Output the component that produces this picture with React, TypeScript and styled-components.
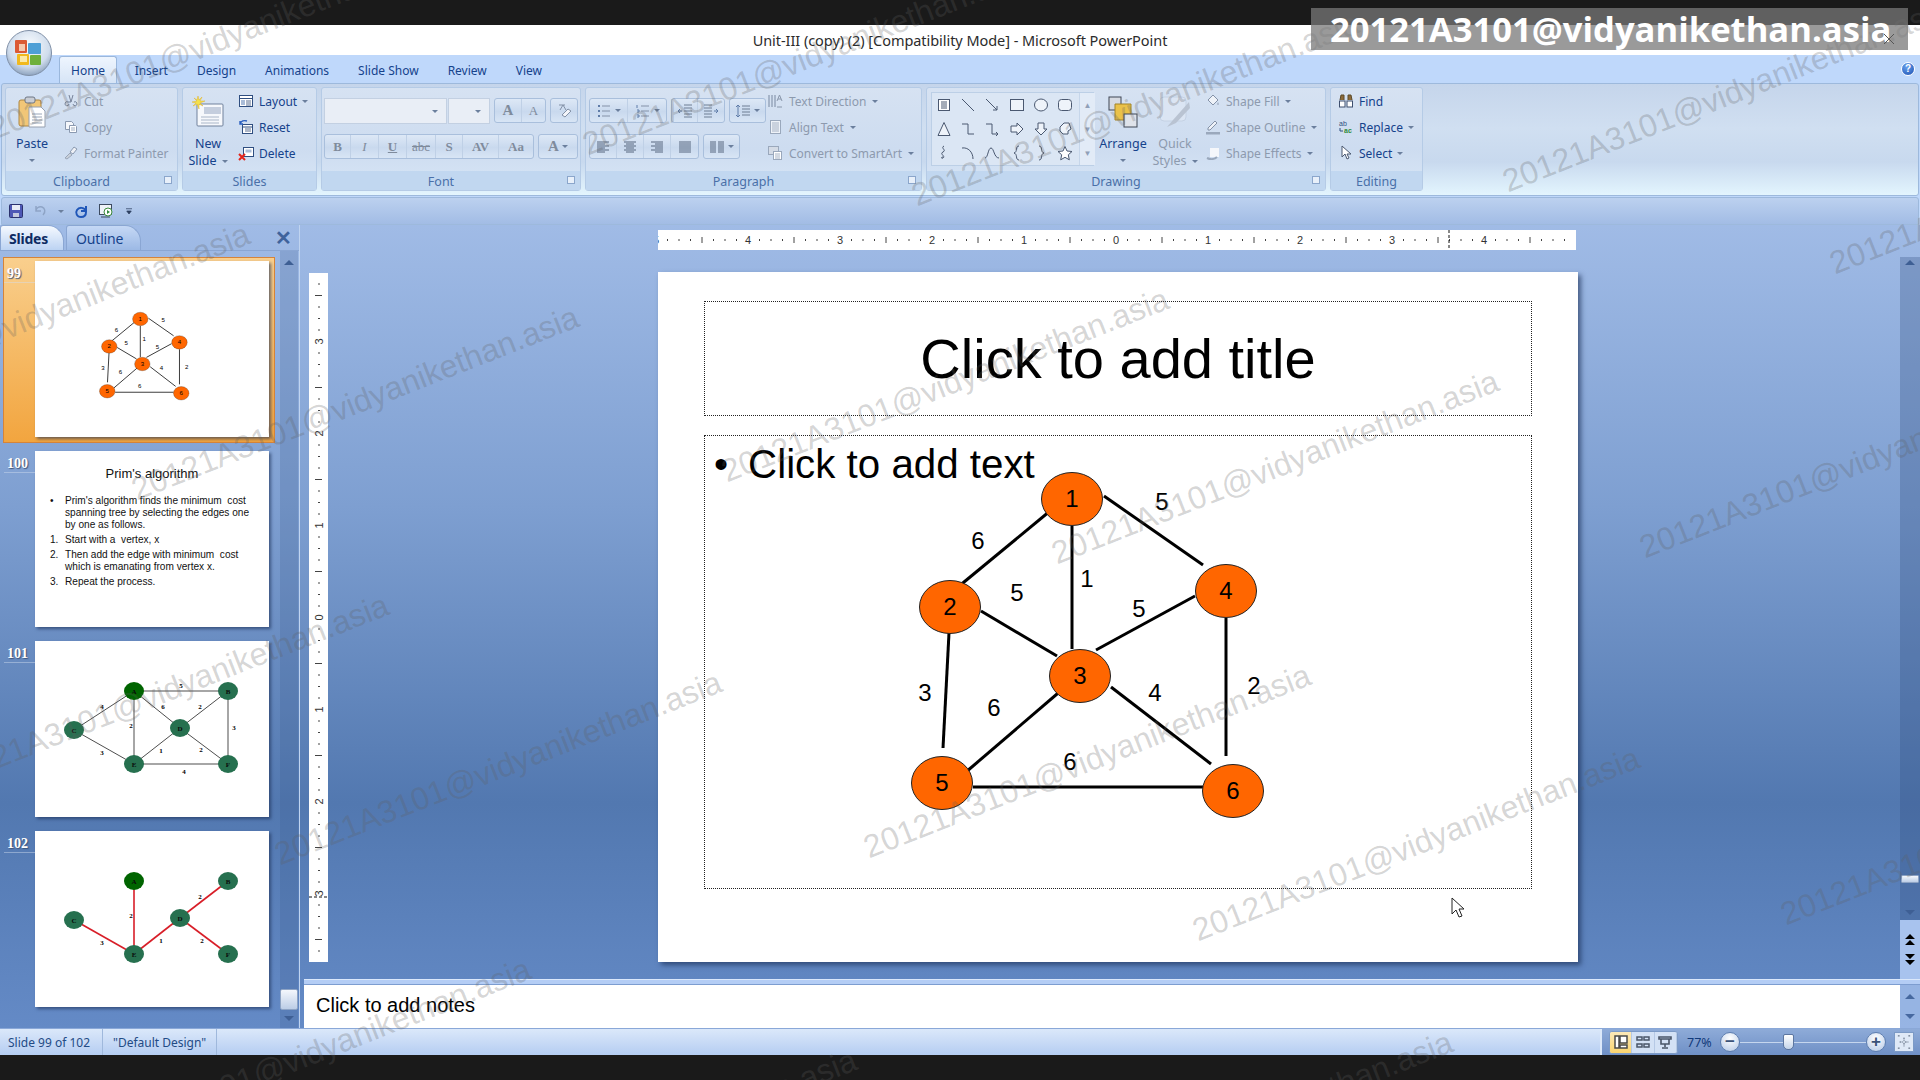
import React from "react";
import styled, { createGlobalStyle } from "styled-components";

const Global = createGlobalStyle`
  html, body { margin: 0; padding: 0; background: #1a1a1a; }
  * { box-sizing: border-box; }
`;

const uiFont = `"Noto Sans", "Liberation Sans", sans-serif`;
const arial = `"Liberation Sans", Arial, sans-serif`;
const serif = `"Liberation Serif", serif`;
const ribbonBlue = "#15428b";
const muted = "#8d9aae";

const Page = styled.div`
  position: relative;
  width: 1920px;
  height: 1080px;
  overflow: hidden;
  display: flex;
  flex-direction: column;
  background: #bfd8fb;
  font-family: ${uiFont};
  font-size: 12px;
  color: ${ribbonBlue};
`;

const BlackBar = styled.div<{ $h: number }>`
  height: ${(p) => p.$h}px;
  flex: none;
  background: #1a1a1a;
`;

const TitleBar = styled.div`
  height: 30px;
  flex: none;
  background: #fff;
  display: flex;
  align-items: center;
  justify-content: center;
  color: #2b2b2b;
  font-size: 14.5px;
  letter-spacing: -0.05px;
`;

const Orb = styled.svg`
  position: absolute;
  left: 5px;
  top: 29px;
  z-index: 3;
`;

const Badge = styled.div`
  position: absolute;
  left: 1311px;
  top: 8px;
  width: 597px;
  height: 42px;
  background: rgba(120, 120, 120, 0.75);
  color: #fff;
  font-family: "Open Sans", "Noto Sans", sans-serif;
  font-weight: 700;
  font-size: 34.6px;
  line-height: 42px;
  padding-left: 19px;
  white-space: nowrap;
  z-index: 6;
`;

const WindowClose = styled.svg`
  position: absolute;
  right: 14px;
  top: 26px;
`;

const TabRow = styled.div`
  height: 28px;
  flex: none;
  background: #bfd8fb;
  display: flex;
  align-items: flex-end;
  padding-left: 59px;
  position: relative;
`;

const Tab = styled.div<{ $active?: boolean }>`
  height: 27px;
  display: flex;
  align-items: center;
  padding: 1px ${(p) => (p.$active ? 11 : 14.5)}px 0;
  font-size: 12px;
  margin-right: ${(p) => (p.$active ? 3 : 0)}px;
  color: ${ribbonBlue};
  background: ${(p) => (p.$active ? "linear-gradient(#eef5fe, #d6e4f6)" : "transparent")};
  border: ${(p) => (p.$active ? "1px solid #9ab7dc" : "none")};
  border-bottom: none;
  border-radius: 3px 3px 0 0;
`;

const HelpIcon = styled.div`
  position: absolute;
  right: 5px;
  top: 7px;
  width: 14px;
  height: 14px;
  border-radius: 50%;
  border: 1px solid #fff;
  background: radial-gradient(circle at 40% 30%, #6aa2ef, #1a4fb0);
  color: #fff;
  font: bold 10px/12px ${arial};
  text-align: center;
`;

const Ribbon = styled.div`
  height: 113px;
  flex: none;
  margin: 0 1px;
  padding: 3px;
  display: flex;
  gap: 4px;
  border: 1px solid #9db9dc;
  border-radius: 3px;
  background: linear-gradient(#c5d5eb 0%, #d0dff1 40%, #c8d9ee 70%, #e3f5fe 100%);
`;

const Group = styled.div<{ $w: number }>`
  width: ${(p) => p.$w}px;
  height: 104px;
  flex: none;
  display: flex;
  flex-direction: column;
  border: 1px solid #b5cbe6;
  border-radius: 3px;
  background: linear-gradient(#d6e2f2, #cddcf0 60%, #d8e6f6);
`;

const GroupBody = styled.div<{ $pl?: number }>`
  flex: 1;
  min-height: 0;
  display: flex;
  padding-left: ${(p) => p.$pl ?? 0}px;
`;

const GroupLabel = styled.div<{ $launch?: boolean }>`
  height: 19px;
  flex: none;
  background: #c1d7f0;
  color: #4a70a8;
  display: flex;
  align-items: center;
  justify-content: center;
  position: relative;
  padding: 1px ${(p) => (p.$launch ? 20 : 0)}px 0 0;
  font-size: 12.5px;
`;

const Launcher = styled.span`
  position: absolute;
  right: 5px;
  top: 5px;
  width: 8px;
  height: 8px;
  border: 1px solid #8ba6cb;
  background: #e8f0fa;
`;

const BigButton = styled.div<{ $w: number; $off?: boolean; $ml?: number }>`
  width: ${(p) => p.$w}px;
  margin-left: ${(p) => p.$ml ?? 0}px;
  flex: none;
  display: flex;
  flex-direction: column;
  align-items: center;
  color: ${(p) => (p.$off ? muted : ribbonBlue)};
  line-height: 17px;
  font-size: 12.5px;
`;

const BigIcon = styled.div`
  height: 47px;
  display: flex;
  align-items: center;
  justify-content: center;
`;

const Caret = styled.span`
  display: inline-block;
  width: 0;
  height: 0;
  margin-left: 5px;
  vertical-align: middle;
  border-left: 3px solid transparent;
  border-right: 3px solid transparent;
  border-top: 3px solid #6b7f9d;
`;

const CaretLine = styled.div`
  height: 17px;
  display: flex;
  align-items: center;
  & > span { margin-left: 0; }
`;

const SmallList = styled.div<{ $ml?: number }>`
  display: flex;
  flex-direction: column;
  margin-left: ${(p) => p.$ml ?? 0}px;
`;

const SmallRow = styled.div<{ $off?: boolean }>`
  height: 26px;
  display: flex;
  align-items: center;
  gap: 5px;
  white-space: nowrap;
  font-size: 12px;
  color: ${(p) => (p.$off ? muted : ribbonBlue)};
  & svg { flex: none; }
  & > span { margin-left: 0; }
`;

const FontStack = styled.div`
  display: flex;
  flex-direction: column;
  gap: 11px;
  padding-top: 10px;
`;

const ToolRow = styled.div`
  display: flex;
  gap: 4px;
  height: 25px;
`;

const Combo = styled.div<{ $w: number; $ml?: number }>`
  width: ${(p) => p.$w}px;
  height: 26px;
  margin-left: ${(p) => p.$ml ?? 0}px;
  background: #e9eef6;
  border: 1px solid #c3d0e2;
  display: flex;
  align-items: center;
  justify-content: flex-end;
  padding-right: 8px;
`;

const ButtonSet = styled.div`
  display: flex;
  height: 25px;
  border: 1px solid #a9bfdc;
  border-radius: 3px;
  background: linear-gradient(#dde8f6, #c9d9ee 55%, #d8e5f5);
`;

const ToolButton = styled.div<{ $w: number; $italic?: boolean; $under?: boolean; $strike?: boolean; $plain?: boolean; $big?: boolean }>`
  width: ${(p) => p.$w}px;
  display: flex;
  align-items: center;
  justify-content: center;
  border-right: 1px solid #bfd0e6;
  color: #7f8b9c;
  font-family: ${serif};
  font-weight: ${(p) => (p.$plain ? 400 : 700)};
  font-size: ${(p) => (p.$big ? 15 : 13)}px;
  font-style: ${(p) => (p.$italic ? "italic" : "normal")};
  text-decoration: ${(p) => (p.$under ? "underline" : p.$strike ? "line-through" : "none")};
  &:last-child { border-right: none; }
  & > span { margin-left: 3px; }
`;

const ParaList = styled(SmallList)`
  & > div { gap: 6px; }
`;

const Gallery = styled.div`
  width: 163px;
  height: 74px;
  margin: 4px 0 0 4px;
  flex: none;
  display: grid;
  grid-template-columns: 147px 16px;
  border: 1px solid #bccfe6;
  background: #dbe6f4;
`;

const ShapeGrid = styled.div`
  display: grid;
  grid-template-columns: repeat(6, 24.2px);
  grid-template-rows: repeat(3, 1fr);
  place-items: center;
`;

const GalleryBar = styled.div`
  display: flex;
  flex-direction: column;
  border-left: 1px solid #c6d6ea;
  background: #e2ebf7;
  align-items: center;
  justify-content: space-around;
  font-size: 8px;
  color: #90a0b8;
  line-height: 8px;
`;

const QuickBar = styled.div`
  height: 28px;
  flex: none;
  margin: 1px 1px 0;
  border: 1px solid #9db9dc;
  border-radius: 3px 3px 0 0;
  background: linear-gradient(#bcd1ef, #a2bce5);
  display: flex;
  align-items: center;
  gap: 9px;
  padding-left: 6px;
`;

const Body = styled.div`
  flex: 1;
  min-height: 0;
  display: flex;
  background: linear-gradient(#a0bbe6 0%, #7e9fd1 35%, #5278b0 72%, #648ac6 100%);
`;

const SidePanel = styled.div`
  width: 300px;
  flex: none;
  display: flex;
  flex-direction: column;
  border-right: 1px solid #c0d4f0;
`;

const SideTabs = styled.div`
  height: 26px;
  flex: none;
  display: flex;
  align-items: flex-end;
  gap: 2px;
  position: relative;
  border-bottom: 1px solid #8aa6d3;
`;

const SideTab = styled.div<{ $active?: boolean }>`
  height: 25px;
  padding: ${(p) => (p.$active ? "0 15px 0 8px" : "0 17px 0 9px")};
  display: flex;
  align-items: center;
  font-size: 14px;
  letter-spacing: -0.2px;
  font-weight: ${(p) => (p.$active ? 700 : 400)};
  color: ${(p) => (p.$active ? "#0d2b63" : "#15428b")};
  background: ${(p) => (p.$active ? "linear-gradient(#f5f9ff, #bcd3f3)" : "linear-gradient(#c5d8f5, #9cb9e5)")};
  border-radius: 3px 16px 0 0;
  border: 1px solid #8aa6d3;
  border-bottom: none;
`;

const CloseX = styled.div`
  position: absolute;
  right: 7px;
  top: 2px;
  font: bold 20px/22px ${arial};
  color: #3f639c;
`;

const SideContent = styled.div`
  flex: 1;
  min-height: 0;
  display: flex;
  padding-top: 6px;
  overflow: hidden;
`;

const ThumbList = styled.div`
  width: 280px;
  flex: none;
  padding-left: 3px;
  overflow: hidden;
`;

const ThumbRow = styled.div<{ $selected?: boolean }>`
  position: relative;
  width: 272px;
  height: 186px;
  margin-bottom: 4px;
  padding: 4px 0 0 32px;
  border: ${(p) => (p.$selected ? "1px solid #d5843a" : "1px solid transparent")};
  background: ${(p) => (p.$selected ? "linear-gradient(#f9cf8d, #f2a53f)" : "transparent")};
  & > :last-child { margin: -1px 0 0 -1px; }
`;

const ThumbNumber = styled.div`
  position: absolute;
  left: 0;
  top: 7px;
  width: 31px;
  padding-left: 3px;
  text-align: left;
  color: #fff;
  font: bold 14px/17px ${serif};
  text-shadow: 1px 1px 1px #40557a;
  border-bottom: 1px solid rgba(210, 222, 240, 0.45);
`;

const Thumb = styled.div`
  width: 234px;
  height: 176px;
  background: #fff;
  box-shadow: 2px 2px 3px rgba(30, 50, 90, 0.65);
  color: #111;
  font-family: ${arial};
  overflow: hidden;
  & > svg { display: block; }
`;

const ThumbTitle = styled.div`
  text-align: center;
  font-size: 13px;
  line-height: 16px;
  padding: 15px 0 13px;
`;

const ThumbText = styled.div`
  position: relative;
  padding-left: 30px;
  padding-right: 13px;
  font-size: 10.1px;
  line-height: 12px;
  margin-bottom: 3px;
`;

const ThumbMark = styled.span`
  position: absolute;
  left: 15px;
`;

const SideScroll = styled.div`
  width: 18px;
  flex: none;
  margin-top: -6px;
  background: rgba(60, 90, 140, 0.22);
  display: flex;
  flex-direction: column;
  align-items: center;
  justify-content: space-between;
  padding: 9px 0 7px;
  color: #4a6794;
`;

const ArrowUp = styled.div`
  width: 0;
  height: 0;
  border-left: 5px solid transparent;
  border-right: 5px solid transparent;
  border-bottom: 5px solid #3e5f94;
`;

const ArrowDown = styled.div`
  width: 0;
  height: 0;
  border-left: 5px solid transparent;
  border-right: 5px solid transparent;
  border-top: 5px solid #3e5f94;
`;

const ScrollThumb = styled.div`
  width: 18px;
  height: 21px;
  border: 1px solid #8da3c4;
  border-radius: 2px;
  background: linear-gradient(#f4f7fc, #bccde6);
`;

const ScrollBottom = styled.div`
  display: flex;
  flex-direction: column;
  align-items: center;
  gap: 6px;
`;

const MainColumn = styled.div`
  flex: 1;
  min-width: 0;
  margin-left: 4px;
  display: flex;
  flex-direction: column;
`;

const Workspace = styled.div`
  flex: 1;
  min-height: 0;
  display: flex;
  padding-left: 5px;
`;

const VRuler = styled.svg`
  flex: none;
  margin-top: 48px;
  margin-right: 330px;
  background: #fff;
`;

const Stage = styled.div`
  width: 1242px;
  flex: none;
`;

const HRuler = styled.svg`
  display: block;
  margin-top: 5px;
  background: #fff;
`;

const Slide = styled.div`
  position: relative;
  width: 920px;
  height: 690px;
  margin-top: 22px;
  padding: 29px 0 0 46px;
  background: #fff;
  box-shadow: 3px 3px 5px rgba(25, 45, 85, 0.65);
  font-family: ${arial};
  color: #000;
`;

const Placeholder = styled.div<{ $h: number; $mt?: number }>`
  width: 828px;
  height: ${(p) => p.$h}px;
  margin-top: ${(p) => p.$mt ?? 0}px;
  border: 1px dotted #222;
`;

const TitleText = styled(Placeholder)`
  display: flex;
  align-items: center;
  justify-content: center;
  font-size: 56px;
`;

const BodyText = styled(Placeholder)`
  display: flex;
  gap: 20px;
  padding: 3px 0 0 9px;
  font-size: 40.3px;
  line-height: 52px;
`;

const GraphLayer = styled.div`
  position: absolute;
  left: 0;
  top: 0;
  pointer-events: none;
  & > svg { display: block; }
`;

const Cursor = styled.svg`
  position: absolute;
  left: 793px;
  top: 625px;
`;

const RightScroll = styled.div`
  width: 20px;
  flex: none;
  margin-left: auto;
  display: flex;
  flex-direction: column;
`;

const ScrollTrack = styled.div`
  flex: 1;
  margin-top: 32px;
  background: rgba(50, 80, 130, 0.3);
  display: flex;
  flex-direction: column;
  align-items: center;
  padding: 3px 0 5px;
`;

const ThumbSmall = styled.div`
  width: 18px;
  height: 8px;
  margin-top: auto;
  margin-bottom: 27px;
  border-radius: 1px;
  background: linear-gradient(#f4f7fc, #bccde6);
  border: 1px solid #8da3c4;
`;

const JumpBox = styled.div`
  height: 59px;
  background: #a8c3ee;
  display: flex;
  flex-direction: column;
  align-items: center;
  justify-content: center;
  gap: 7px;
  color: #000;
`;

const Splitter = styled.div`
  height: 6px;
  flex: none;
  background: #b4cdf5;
  border-top: 1px solid #dbe8fb;
  border-bottom: 1px solid #7d9dd0;
`;

const NotesRow = styled.div`
  height: 43px;
  flex: none;
  display: flex;
`;

const Notes = styled.div`
  flex: 1;
  background: #fff;
  color: #000;
  font-family: ${arial};
  font-size: 20px;
  display: flex;
  align-items: center;
  padding: 0 0 2px 12px;
`;

const NotesScroll = styled.div`
  width: 20px;
  flex: none;
  background: #a8c3ee;
  display: flex;
  flex-direction: column;
  align-items: center;
  justify-content: space-between;
  padding: 9px 0;
  opacity: 0.75;
`;

const StatusBar = styled.div`
  height: 27px;
  flex: none;
  display: flex;
  align-items: stretch;
  background: linear-gradient(#dbe8fa, #b5cdf2);
  border-top: 1px solid #8aa8d8;
  font-size: 12px;
  color: #234b85;
`;

const StatusCell = styled.div<{ $w: number; $pl: number }>`
  width: ${(p) => p.$w}px;
  display: flex;
  align-items: center;
  padding-left: ${(p) => p.$pl}px;
  border-right: 1px solid #9fb8dc;
  white-space: nowrap;
`;

const StatusRight = styled.div`
  margin-left: auto;
  width: 320px;
  background: linear-gradient(#8eabd8, #6f90c6);
  border-left: 2px solid #dce9fa;
  display: flex;
  align-items: center;
  padding-left: 7px;
`;

const ViewButtons = styled.div`
  width: 69px;
  height: 23px;
  display: flex;
  border: 1px solid #7c9ac6;
  border-radius: 3px;
  background: #d3e1f5;
  overflow: hidden;
`;

const ViewButton = styled.div<{ $on?: boolean }>`
  flex: 1;
  display: flex;
  align-items: center;
  justify-content: center;
  background: ${(p) => (p.$on ? "linear-gradient(#fbe8b8, #fbd56f)" : "transparent")};
  border-right: 1px solid #b6c9e5;
`;

const ZoomValue = styled.div`
  width: 42px;
  padding-left: 9px;
  color: #123a7a;
  font-size: 12.5px;
`;

const RoundButton = styled.div`
  width: 20px;
  height: 20px;
  flex: none;
  border-radius: 50%;
  border: 1px solid #5f7fb0;
  background: radial-gradient(circle at 50% 30%, #fff, #b4c8e6);
  color: #3b5278;
  font: bold 17px/17px ${arial};
  text-align: center;
`;

const ZoomTrack = styled.div`
  position: relative;
  width: 126px;
  height: 1px;
  flex: none;
  background: #c5d6ee;
`;

const ZoomKnob = styled.div`
  position: absolute;
  left: 43px;
  top: -8px;
  width: 11px;
  height: 16px;
  background: linear-gradient(#fff, #c4d4ea);
  border: 1px solid #5c76a0;
  border-radius: 2px 2px 5px 5px;
`;

const FitButton = styled.div`
  width: 20px;
  height: 20px;
  margin-left: 8px;
  flex: none;
  background: #dfe9f7;
  border: 1px solid #7c9ac6;
  display: flex;
  align-items: center;
  justify-content: center;
`;

const Stamp = styled.div<{ $x: number; $y: number }>`
  position: absolute;
  left: ${(p) => (p.$x + 6) * 1.2245}px;
  top: ${(p) => (p.$y + 15) * 1.2245 - 38}px;
  height: 38px;
  font: 32px/38px ${arial};
  white-space: nowrap;
  color: rgba(95, 95, 95, 0.27);
  transform-origin: 0 100%;
  transform: rotate(-21.5deg);
  pointer-events: none;
  z-index: 5;
`;

const stampSpots = [
  [706, 692], [975, 760], [860, 452], [1228, 148], [1340, 447], [745, 160], [477, 118],
  [-8, 105], [225, 698], [108, 400], [-47, 635], [69, 932], [-160, 332], [590, 385],
  [822, 992], [335, 1007], [1455, 747], [1495, 215],
];

type IconProps = { size?: number };
const svgBase = (size: number, body: React.ReactNode, view = "0 0 16 16") => (
  <svg width={size} height={size} viewBox={view} fill="none">{body}</svg>
);

const lines = (ys: number[], x1: number, x2: number, c = "#56677f") =>
  ys.map((y) => <path key={y} d={`M${x1} ${y}H${x2}`} stroke={c} />);

const icons: Record<string, React.ReactNode> = {
  cut: <path d="M6 2l2 7M10 2L8 9M6 11a2 2 0 1 1-1-2l3 0M10 11a2 2 0 1 0 1-2" stroke="#77839a" />,
  copy: <><path d="M2.5 2.5h6l2 2v6h-8z" fill="#f5f7fb" stroke="#8a99b0" /><path d="M6.5 6.5h6l1 1v6h-7z" fill="#fff" stroke="#8a99b0" />{lines([9, 11], 8, 12, "#a0aec2")}</>,
  painter: <><path d="M11 2l3 2-4 5-3-2z" fill="#eef1f6" stroke="#8a99b0" /><path d="M7 8l2 2-5 4-2-1z" fill="#c9d0da" stroke="#9aa6b8" /></>,
  layout: <><rect x="1.5" y="2.5" width="13" height="11" fill="#fff" stroke="#2f4e80" /><path d="M1.5 5.5h13" stroke="#2f4e80" /><rect x="3" y="7" width="4" height="5" fill="#a9bcd8" />{lines([8, 10, 12], 8, 13, "#5a6f90")}</>,
  reset: <><rect x="4.5" y="5.5" width="10" height="9" fill="#fff" stroke="#2f4e80" /><path d="M4.5 8h10" stroke="#2f4e80" />{lines([10, 12], 7, 13, "#5a6f90")}<path d="M2 5c1-3 4-4 7-3M2 2v3h3" stroke="#2a5fc0" strokeWidth="1.4" /></>,
  del: <><rect x="5.5" y="2.5" width="10" height="9" fill="#fff" stroke="#2f4e80" /><rect x="7.5" y="4.5" width="6" height="3" fill="#a9bcd8" /><path d="M1 9l6 6M7 9l-6 6" stroke="#e3241b" strokeWidth="2" /></>,
  eraser: <><path d="M3 2h6M4 7l3-5 3 5" stroke="#8391a7" /><path d="M6 12l6-6 3 2-6 6z" fill="#f3f5fa" stroke="#8391a7" /></>,
  bullets: <>{lines([3, 8, 13], 6, 14, "#8492a8")}<path d="M2 3h2M2 8h2M2 13h2" stroke="#5f7ca8" strokeWidth="2" /></>,
  numbers: <>{lines([3, 8, 13], 6, 14, "#8492a8")}<path d="M2 2v3M2 7h2v2H2M2 12h2v2H2" stroke="#5f7ca8" /></>,
  outdent: <>{lines([2, 5, 8, 11, 14], 7, 15, "#6f7e94")}<path d="M5 8H1M3 6L1 8l2 2" stroke="#5f7ca8" /></>,
  indent: <>{lines([2, 5, 8, 11, 14], 1, 9, "#6f7e94")}<path d="M11 8h4M13 6l2 2-2 2" stroke="#5f7ca8" /></>,
  spacing: <>{lines([3, 6, 9, 12], 7, 15, "#6f7e94")}<path d="M3 2v12M1 4l2-2 2 2M1 12l2 2 2-2" stroke="#5f7ca8" /></>,
  left: <>{[3, 5, 7, 9, 11, 13].map((y, i) => <path key={y} d={i % 2 ? `M2 ${y}H10` : `M2 ${y}H14`} stroke="#56677f" />)}</>,
  center: <>{[3, 5, 7, 9, 11, 13].map((y, i) => <path key={y} d={i % 2 ? `M4 ${y}H12` : `M2 ${y}H14`} stroke="#56677f" />)}</>,
  right: <>{[3, 5, 7, 9, 11, 13].map((y, i) => <path key={y} d={i % 2 ? `M6 ${y}H14` : `M2 ${y}H14`} stroke="#56677f" />)}</>,
  justify: <>{lines([3, 5, 7, 9, 11, 13], 2, 14)}</>,
  columns: <>{[3, 5, 7, 9, 11, 13].map((y) => <path key={y} d={`M1 ${y}H7M9 ${y}H15`} stroke="#56677f" />)}</>,
  textDir: <><path d="M2 2v12M5 2v12M8 2v12" stroke="#7888a0" /><path d="M10 8l2.5-6L15 8M11 6h3M10 14h5" stroke="#8a97ab" /></>,
  alignText: <><rect x="3.5" y="1.5" width="10" height="13" fill="#eef2f8" stroke="#9aa8bc" />{lines([4, 6, 8, 10, 12], 5, 12, "#a6b2c4")}</>,
  smartArt: <><rect x="1.5" y="1.5" width="10" height="8" fill="#d4dbe6" stroke="#9aa8bc" /><rect x="6.5" y="6.5" width="8" height="8" fill="#fff" stroke="#9aa8bc" />{lines([9, 11, 13], 8, 13, "#a6b2c4")}</>,
  fill: <><path d="M8 2l5 5-5 5-5-5z" fill="#eef2f8" stroke="#8492a8" /><path d="M13 9c1 2 1 3 0 3s-1-1 0-3z" fill="#9aa8bc" /></>,
  outline: <><path d="M3 9l7-7 2 2-7 7H3z" fill="#eef2f8" stroke="#8492a8" /><rect x="1" y="13" width="14" height="2.5" fill="#9aa8bc" /></>,
  effects: <><rect x="5" y="3" width="9" height="9" fill="#f5f7fb" /><path d="M2 13c4 2 8 1 10-1" stroke="#9aa8bc" strokeWidth="2" /></>,
  find: <><path d="M2 7l1-5h3v5M14 7l-1-5h-3v5" fill="#8d6a3a" stroke="#5a4a2a" /><rect x="1.5" y="8" width="5.5" height="6" fill="#fff" stroke="#3d4e6e" /><rect x="9" y="8" width="5.5" height="6" fill="#fff" stroke="#3d4e6e" /></>,
  replaceIcon: <><text x="1" y="7" fontSize="7" fontFamily={arial} fill="#2f4e80">ab</text><text x="6" y="14" fontSize="7" fontWeight="700" fontFamily={arial} fill="#2f8a3a">ac</text><path d="M2 9v3h3" stroke="#2f4e80" /></>,
  select: <path d="M4 1v11l3-3 2 5 2-1-2-4h4z" fill="#fff" stroke="#4a5870" />,
  save: <><rect x="1.5" y="1.5" width="13" height="13" rx="1" fill="#4d57b5" stroke="#2b326e" /><rect x="4" y="2" width="8" height="5" fill="#e8ecf6" /><rect x="5" y="10" width="6" height="4" fill="#c2c8de" /></>,
  undo: <path d="M3 8c0-3 3-5 6-4s4 5 1 8M3 3v5h5" stroke="#8ea4c6" strokeWidth="1.5" />,
  redo: <path d="M13 3v5H8M13 8c-2-4-7-4-9-1s0 7 4 7 5-3 5-5" stroke="#1f56b8" strokeWidth="2" />,
  show: <><rect x="1.5" y="1.5" width="12" height="10" fill="#eef2f8" stroke="#3c4a60" /><path d="M3 14h9" stroke="#3c4a60" /><circle cx="10" cy="9" r="4" fill="#fff" stroke="#3c8a3c" /><path d="M9 7l3 2-3 2z" fill="#2f8a3a" /></>,
  more: <path d="M4 5h8M5 8h6l-3 4z" stroke="#2c3f60" fill="#2c3f60" />,
  normal: <><path d="M2 2h4v12H2zM7 2h7v7H7zM7 11h7v3H7z" fill="#fff" stroke="#4a4a4a" strokeWidth="1.5" /></>,
  sorter: <path d="M2 3h5v3H2zM9 3h5v3H9zM2 10h5v3H2zM9 10h5v3H9z" stroke="#4a5568" strokeWidth="1.5" />,
  present: <path d="M2 3h12v2H2zM4 5h8v5H4zM8 10v3M5 14h6" stroke="#4a5568" strokeWidth="1.6" />,
  fit: <path d="M1 1l3 0M15 1h-3M1 15h3M15 15h-3M8 3v4M8 9v4M3 8h4M9 8h4" stroke="#3c4a60" strokeDasharray="2 1" />,
};

const Icon = ({ name, size = 16 }: IconProps & { name: string }) => svgBase(size, icons[name]);

const shapes: React.ReactNode[] = [
  <><rect x="2.5" y="2.5" width="11" height="11" fill="#fff" stroke="#4a5870" />{lines([5, 7, 9, 11], 5, 11, "#4a5870")}</>,
  <path d="M2 2l12 12" stroke="#4a5870" />,
  <path d="M2 2l11 11M13 9v4H9" stroke="#4a5870" />,
  <rect x="1.5" y="2.5" width="13" height="11" fill="#eef3fa" stroke="#4a5870" />,
  <ellipse cx="8" cy="8" rx="6.5" ry="6" fill="#eef3fa" stroke="#4a5870" />,
  <rect x="1.5" y="2.5" width="13" height="11" rx="3" fill="#eef3fa" stroke="#4a5870" />,
  <path d="M8 1.5l6 13H2z" fill="#eef3fa" stroke="#4a5870" />,
  <path d="M2 3h6v10h6" stroke="#4a5870" />,
  <path d="M2 3h6v10h5M12 11l2 2-2 2" stroke="#4a5870" />,
  <path d="M2 5h6V2l6 6-6 6v-3H2z" fill="#eef3fa" stroke="#4a5870" />,
  <path d="M5 2h6v6h3l-6 6-6-6h3z" fill="#eef3fa" stroke="#4a5870" />,
  <path d="M3 6l4-4h5l2 6-3 2v3H6L3 10z" fill="#eef3fa" stroke="#4a5870" />,
  <path d="M8 1C4 3 11 5 7 7s3 4 0 6c-2 1-2-1 0-1" stroke="#4a5870" />,
  <path d="M2 3c6-1 11 4 11 11" stroke="#4a5870" />,
  <path d="M1 13C4 13 4 3 7 3s3 10 8 10" stroke="#4a5870" />,
  <path d="M10 1C6 1 9 7 5 8c4 1 1 7 5 7" stroke="#4a5870" />,
  <path d="M6 1c4 0 1 6 5 7-4 1-1 7-5 7" stroke="#4a5870" />,
  <path d="M8 1.5l2 4.5 5 .5-3.700 3.300 1 5L8 12.300 3.700 14.800l1-5L1 6.500l5-.5z" fill="#fff" stroke="#4a5870" />,
];

const nodes1: [string, number, number][] = [
  ["1", 1072, 499], ["2", 950, 607], ["3", 1080, 676], ["4", 1226, 591], ["5", 942, 783], ["6", 1233, 791],
];
const edges1 = [
  [1050, 511, 958, 587], [1072, 526, 1072, 649], [1104, 496, 1203, 565], [981, 611, 1057, 656], [949, 633, 943, 748],
  [1096, 650, 1195, 596], [1064, 688, 966, 772], [1111, 687, 1211, 764], [1226, 618, 1226, 756], [973, 787, 1203, 787],
];
const labels1: [string, number, number][] = [
  ["5", 1162, 502], ["6", 978, 541], ["1", 1087, 579], ["5", 1017, 593], ["5", 1139, 609], ["3", 925, 693],
  ["6", 994, 708], ["4", 1155, 693], ["2", 1254, 686], ["6", 1070, 762],
];

const PrimGraph = ({ width, height }: { width: number; height: number }) => (
  <svg width={width} height={height} viewBox="658 272 920 690">
    {edges1.map((e, i) => <line key={i} x1={e[0]} y1={e[1]} x2={e[2]} y2={e[3]} stroke="#000" strokeWidth="3" />)}
    {nodes1.map(([t, x, y]) => (
      <g key={t}>
        <ellipse cx={x} cy={y} rx="30.500" ry="26.500" fill="#ff6600" stroke="#222" strokeWidth="1" />
        <text x={x} y={y + 8} fontSize="24" fontFamily={arial} textAnchor="middle" fill="#000">{t}</text>
      </g>
    ))}
    {labels1.map(([t, x, y], i) => (
      <text key={i} x={x} y={y + 8} fontSize="24" fontFamily={arial} textAnchor="middle" fill="#000">{t}</text>
    ))}
  </svg>
);

const spots: Record<string, [number, number]> = {
  A: [99, 50], B: [193, 50], C: [39, 89], D: [145, 87], E: [99, 123], F: [193, 123],
};

const MiniGraph = ({ edges, labels, red }: { edges: string[]; labels: [string, number, number][]; red?: boolean }) => (
  <svg width="234" height="176" viewBox="0 0 234 176">
    {edges.map((e) => {
      const a = spots[e[0]];
      const b = spots[e[1]];
      return <line key={e} x1={a[0]} y1={a[1]} x2={b[0]} y2={b[1]} stroke={red ? "#d81e28" : "#000"} strokeWidth={red ? 1.6 : 0.7} />;
    })}
    {Object.entries(spots).map(([k, [x, y]]) => (
      <g key={k}>
        <ellipse cx={x} cy={y} rx="10" ry="9" fill={k === "A" ? "#006400" : "#26704f"} />
        <text x={x} y={y + 2.500} fontSize="7" fontWeight="700" fontFamily={serif} textAnchor="middle" fill="#0a0a0a">{k}</text>
      </g>
    ))}
    {labels.map(([t, x, y], i) => (
      <text key={i} x={x} y={y + 2.500} fontSize="7" fontWeight="700" fontFamily={serif} textAnchor="middle" fill="#000">{t}</text>
    ))}
  </svg>
);

const rulerTicks = (from: number, to: number) => {
  const out: number[] = [];
  for (let i = from; i <= to; i++) out.push(i);
  return out;
};

const TopRuler = () => (
  <HRuler width="918" height="20" viewBox="0 0 918 20">
    {rulerTicks(-40, 39).map((i) => {
      const x = 458 + i * 11.5;
      if (i % 8 === 0) return <text key={i} x={x} y="14" fontSize="11" fontFamily={arial} fill="#333" textAnchor="middle">{Math.abs(i / 8)}</text>;
      if (i % 4 === 0) return <line key={i} x1={x} x2={x} y1="7" y2="13" stroke="#444" />;
      return <line key={i} x1={x} x2={x} y1="9" y2="11" stroke="#444" />;
    })}
    <line x1="791" x2="791" y1="0" y2="20" stroke="#111" strokeDasharray="3 2" />
  </HRuler>
);

const SideRuler = () => (
  <VRuler width="19" height="689" viewBox="0 0 19 689">
    {rulerTicks(-29, 29).map((i) => {
      const y = 344.5 + i * 11.5;
      if (i % 8 === 0) return <text key={i} x="9.500" y={y + 4} fontSize="11" fontFamily={arial} fill="#333" textAnchor="middle" transform={`rotate(-90 9.500 ${y})`}>{Math.abs(i / 8)}</text>;
      if (i % 4 === 0) return <line key={i} x1="6" x2="13" y1={y} y2={y} stroke="#444" />;
      return <line key={i} x1="9" x2="11" y1={y} y2={y} stroke="#444" />;
    })}
    <line x1="0" x2="19" y1="624" y2="624" stroke="#111" strokeDasharray="3 2" />
  </VRuler>
);

const OfficeOrb = () => (
  <Orb width="48" height="48" viewBox="0 0 48 48">
    <defs>
      <radialGradient id="orb" cx="50%" cy="35%" r="65%">
        <stop offset="0%" stopColor="#fbfdff" />
        <stop offset="70%" stopColor="#cfdcec" />
        <stop offset="100%" stopColor="#8ea4c0" />
      </radialGradient>
    </defs>
    <circle cx="24" cy="24" r="22.500" fill="url(#orb)" stroke="#7f8fa6" />
    <rect x="10" y="11" width="12" height="13" rx="1" fill="#dc5a34" />
    <rect x="23" y="14" width="13" height="11" rx="1" fill="#4e9fd6" />
    <rect x="12" y="25" width="12" height="11" rx="1" fill="#f1b91e" />
    <rect x="25" y="26" width="11" height="10" rx="1" fill="#6fb03c" />
    <rect x="14" y="15" width="6" height="7" fill="#f6c9b0" />
    <rect x="15" y="27" width="7" height="6" fill="#fbeaa8" />
  </Orb>
);

const PasteIcon = () => (
  <svg width="28" height="34" viewBox="0 0 28 34">
    <rect x="1" y="5" width="22" height="26" rx="2" fill="#f1c677" stroke="#ad8643" />
    <rect x="7" y="2" width="10" height="6" rx="2" fill="#c9cdd4" stroke="#6e7684" />
    <path d="M11 12h12l4 4v16H11z" fill="#fff" stroke="#96a0b0" />
    <path d="M14 19h10M14 22h10M14 25h10M14 28h10" stroke="#9aa6b8" />
  </svg>
);

const NewSlideIcon = () => (
  <svg width="32" height="32" viewBox="0 0 32 32">
    <rect x="5" y="8" width="26" height="22" rx="1" fill="#f6f8fc" stroke="#70819c" />
    <rect x="12" y="11" width="17" height="7" fill="#c5cede" />
    <path d="M9 21h18M9 24h18M9 27h18" stroke="#aab6c8" />
    <path d="M6 0l1 4 3-3-2 4 5 0-5 2 3 3-4-2 0 5-2-5-4 2 3-3-4-1 5-1-3-3 3 2z" fill="#f4e04c" stroke="#e2b52a" strokeWidth="0.500" />
  </svg>
);

const ArrangeIcon = () => (
  <svg width="32" height="32" viewBox="0 0 32 32">
    <rect x="2" y="1" width="12" height="13" fill="#d6dae2" stroke="#3f4654" />
    <path d="M8 8h16v16H8z" fill="#eac148" stroke="#a38326" />
    <rect x="17" y="18" width="13" height="13" fill="#dfe3ea" stroke="#3f4654" />
  </svg>
);

const QuickIcon = () => (
  <svg width="32" height="32" viewBox="0 0 32 32">
    <rect x="1" y="1" width="26" height="24" rx="4" fill="#dbe5f3" stroke="#c5d2e4" />
    <path d="M30 6L14 24l-6 7 9-4L31 12z" fill="#b9c3d2" />
  </svg>
);

const Launch = () => <Launcher />;

export default function App() {
  return (
    <Page>
      <Global />
      <BlackBar $h={25} />
      <TitleBar>Unit-III (copy) (2) [Compatibility Mode] - Microsoft PowerPoint</TitleBar>
      <OfficeOrb />
      <Badge>
        20121A3101@vidyanikethan.asia
        <WindowClose width="10" height="10" viewBox="0 0 10 10"><path d="M0 0l10 10M10 0L0 10" stroke="#555" /></WindowClose>
      </Badge>
      <TabRow>
        <Tab $active>Home</Tab>
        {["Insert", "Design", "Animations", "Slide Show", "Review", "View"].map((t) => <Tab key={t}>{t}</Tab>)}
        <HelpIcon>?</HelpIcon>
      </TabRow>
      <Ribbon>
        <Group $w={173}>
          <GroupBody $pl={3}>
            <BigButton $w={46}>
              <BigIcon><PasteIcon /></BigIcon>
              Paste
              <CaretLine><Caret /></CaretLine>
            </BigButton>
            <SmallList $ml={8}>
              <SmallRow $off><Icon name="cut" />Cut</SmallRow>
              <SmallRow $off><Icon name="copy" />Copy</SmallRow>
              <SmallRow $off><Icon name="painter" />Format Painter</SmallRow>
            </SmallList>
          </GroupBody>
          <GroupLabel $launch>Clipboard<Launch /></GroupLabel>
        </Group>
        <Group $w={135}>
          <GroupBody $pl={3}>
            <BigButton $w={44}>
              <BigIcon><NewSlideIcon /></BigIcon>
              New
              <div>Slide<Caret /></div>
            </BigButton>
            <SmallList $ml={8}>
              <SmallRow><Icon name="layout" />Layout<Caret /></SmallRow>
              <SmallRow><Icon name="reset" />Reset</SmallRow>
              <SmallRow><Icon name="del" />Delete</SmallRow>
            </SmallList>
          </GroupBody>
          <GroupLabel>Slides</GroupLabel>
        </Group>
        <Group $w={260}>
          <GroupBody $pl={2}>
            <FontStack>
              <ToolRow>
                <Combo $w={123}><Caret /></Combo>
                <Combo $w={42} $ml={-3}><Caret /></Combo>
                <ButtonSet>
                  <ToolButton $w={27} $big>A</ToolButton>
                  <ToolButton $w={23} $plain>A</ToolButton>
                </ButtonSet>
                <ButtonSet><ToolButton $w={26}><Icon name="eraser" /></ToolButton></ButtonSet>
              </ToolRow>
              <ToolRow>
                <ButtonSet>
                  <ToolButton $w={26}>B</ToolButton>
                  <ToolButton $w={28} $italic $plain>I</ToolButton>
                  <ToolButton $w={28} $under>U</ToolButton>
                  <ToolButton $w={29} $strike $plain>abc</ToolButton>
                  <ToolButton $w={27}>S</ToolButton>
                  <ToolButton $w={36}>AV</ToolButton>
                  <ToolButton $w={34}>Aa</ToolButton>
                </ButtonSet>
                <ButtonSet><ToolButton $w={38} $big>A<Caret /></ToolButton></ButtonSet>
              </ToolRow>
            </FontStack>
          </GroupBody>
          <GroupLabel $launch>Font<Launch /></GroupLabel>
        </Group>
        <Group $w={337}>
          <GroupBody $pl={3}>
            <FontStack>
              <ToolRow>
                <ButtonSet>
                  <ToolButton $w={38}><Icon name="bullets" /><Caret /></ToolButton>
                  <ToolButton $w={38}><Icon name="numbers" /><Caret /></ToolButton>
                </ButtonSet>
                <ButtonSet>
                  <ToolButton $w={26}><Icon name="outdent" /></ToolButton>
                  <ToolButton $w={26}><Icon name="indent" /></ToolButton>
                </ButtonSet>
                <ButtonSet><ToolButton $w={35}><Icon name="spacing" /><Caret /></ToolButton></ButtonSet>
              </ToolRow>
              <ToolRow>
                <ButtonSet>
                  <ToolButton $w={27}><Icon name="left" /></ToolButton>
                  <ToolButton $w={27}><Icon name="center" /></ToolButton>
                  <ToolButton $w={27}><Icon name="right" /></ToolButton>
                  <ToolButton $w={27}><Icon name="justify" /></ToolButton>
                </ButtonSet>
                <ButtonSet><ToolButton $w={35}><Icon name="columns" /><Caret /></ToolButton></ButtonSet>
              </ToolRow>
            </FontStack>
            <ParaList $ml={1}>
              <SmallRow $off><Icon name="textDir" />Text Direction<Caret /></SmallRow>
              <SmallRow $off><Icon name="alignText" />Align Text<Caret /></SmallRow>
              <SmallRow $off><Icon name="smartArt" />Convert to SmartArt<Caret /></SmallRow>
            </ParaList>
          </GroupBody>
          <GroupLabel $launch>Paragraph<Launch /></GroupLabel>
        </Group>
        <Group $w={400}>
          <GroupBody>
            <Gallery>
              <ShapeGrid>{shapes.map((s, i) => <React.Fragment key={i}>{svgBase(16, s)}</React.Fragment>)}</ShapeGrid>
              <GalleryBar><span>▲</span><span>▼</span><span>▼</span></GalleryBar>
            </Gallery>
            <BigButton $w={50} $ml={4}>
              <BigIcon><ArrangeIcon /></BigIcon>
              Arrange
              <CaretLine><Caret /></CaretLine>
            </BigButton>
            <BigButton $w={50} $off $ml={2}>
              <BigIcon><QuickIcon /></BigIcon>
              Quick
              <div>Styles<Caret /></div>
            </BigButton>
            <SmallList $ml={5}>
              <SmallRow $off><Icon name="fill" />Shape Fill<Caret /></SmallRow>
              <SmallRow $off><Icon name="outline" />Shape Outline<Caret /></SmallRow>
              <SmallRow $off><Icon name="effects" />Shape Effects<Caret /></SmallRow>
            </SmallList>
          </GroupBody>
          <GroupLabel $launch>Drawing<Launch /></GroupLabel>
        </Group>
        <Group $w={93}>
          <GroupBody $pl={7}>
            <SmallList>
              <SmallRow><Icon name="find" />Find</SmallRow>
              <SmallRow><Icon name="replaceIcon" />Replace<Caret /></SmallRow>
              <SmallRow><Icon name="select" />Select<Caret /></SmallRow>
            </SmallList>
          </GroupBody>
          <GroupLabel>Editing</GroupLabel>
        </Group>
      </Ribbon>
      <QuickBar>
        <Icon name="save" />
        <Icon name="undo" />
        <CaretLine><Caret /></CaretLine>
        <Icon name="redo" />
        <Icon name="show" />
        <Icon name="more" size={12} />
      </QuickBar>
      <Body>
        <SidePanel>
          <SideTabs>
            <SideTab $active>Slides</SideTab>
            <SideTab>Outline</SideTab>
            <CloseX>✕</CloseX>
          </SideTabs>
          <SideContent>
            <ThumbList>
              <ThumbRow $selected>
                <ThumbNumber>99</ThumbNumber>
                <Thumb><PrimGraph width={234} height={176} /></Thumb>
              </ThumbRow>
              <ThumbRow>
                <ThumbNumber>100</ThumbNumber>
                <Thumb>
                  <ThumbTitle>Prim's algorithm</ThumbTitle>
                  <ThumbText><ThumbMark>•</ThumbMark>Prim's algorithm finds the minimum&nbsp; cost spanning tree by selecting the edges one by one as follows.</ThumbText>
                  <ThumbText><ThumbMark>1.</ThumbMark>Start with a&nbsp; vertex, x</ThumbText>
                  <ThumbText><ThumbMark>2.</ThumbMark>Then add the edge with minimum&nbsp; cost which is emanating from vertex x.</ThumbText>
                  <ThumbText><ThumbMark>3.</ThumbMark>Repeat the process.</ThumbText>
                </Thumb>
              </ThumbRow>
              <ThumbRow>
                <ThumbNumber>101</ThumbNumber>
                <Thumb>
                  <MiniGraph
                    edges={["AB", "AC", "AD", "AE", "BD", "BF", "CE", "DE", "DF", "EF"]}
                    labels={[["5", 146, 44], ["4", 67, 65], ["6", 128, 65], ["2", 165, 65], ["2", 96, 84], ["3", 199, 86], ["3", 67, 111], ["1", 126, 109], ["2", 166, 108], ["4", 149, 130]]}
                  />
                </Thumb>
              </ThumbRow>
              <ThumbRow>
                <ThumbNumber>102</ThumbNumber>
                <Thumb>
                  <MiniGraph
                    red
                    edges={["AE", "CE", "DE", "BD", "DF"]}
                    labels={[["2", 165, 65], ["2", 96, 84], ["3", 67, 111], ["1", 126, 109], ["2", 167, 109]]}
                  />
                </Thumb>
              </ThumbRow>
            </ThumbList>
            <SideScroll>
              <ArrowUp />
              <ScrollBottom><ScrollThumb /><ArrowDown /></ScrollBottom>
            </SideScroll>
          </SideContent>
        </SidePanel>
        <MainColumn>
          <Workspace>
            <SideRuler />
            <Stage>
              <TopRuler />
              <Slide>
                <TitleText $h={115}>Click to add title</TitleText>
                <BodyText $h={454} $mt={19}><span>•</span><span>Click to add text</span></BodyText>
                <GraphLayer><PrimGraph width={920} height={690} /></GraphLayer>
                <Cursor width="16" height="22" viewBox="0 0 16 22">
                  <path d="M1 1v16l4-4 3 7 3-1-3-7h5z" fill="#fff" stroke="#222" />
                </Cursor>
              </Slide>
            </Stage>
            <RightScroll>
              <ScrollTrack><ArrowUp /><ThumbSmall /><ArrowDown /></ScrollTrack>
              <JumpBox>
                <svg width="12" height="12" viewBox="0 0 12 12"><path d="M6 0l5 5H1zM6 6l5 5H1z" fill="#000" /></svg>
                <svg width="12" height="12" viewBox="0 0 12 12"><path d="M6 6l5-5H1zM6 12l5-5H1z" fill="#000" /></svg>
              </JumpBox>
            </RightScroll>
          </Workspace>
          <Splitter />
          <NotesRow>
            <Notes>Click to add notes</Notes>
            <NotesScroll><ArrowUp /><ArrowDown /></NotesScroll>
          </NotesRow>
        </MainColumn>
      </Body>
      <StatusBar>
        <StatusCell $w={103} $pl={8}>Slide 99 of 102</StatusCell>
        <StatusCell $w={114} $pl={10}>"Default Design"</StatusCell>
        <StatusRight>
          <ViewButtons>
            <ViewButton $on><Icon name="normal" /></ViewButton>
            <ViewButton><Icon name="sorter" /></ViewButton>
            <ViewButton><Icon name="present" /></ViewButton>
          </ViewButtons>
          <ZoomValue>77%</ZoomValue>
          <RoundButton>−</RoundButton>
          <ZoomTrack><ZoomKnob /></ZoomTrack>
          <RoundButton>+</RoundButton>
          <FitButton><Icon name="fit" size={14} /></FitButton>
        </StatusRight>
      </StatusBar>
      <BlackBar $h={25} />
      {stampSpots.map(([x, y], i) => (
        <Stamp key={i} $x={x} $y={y}>20121A3101@vidyanikethan.asia</Stamp>
      ))}
    </Page>
  );
}
